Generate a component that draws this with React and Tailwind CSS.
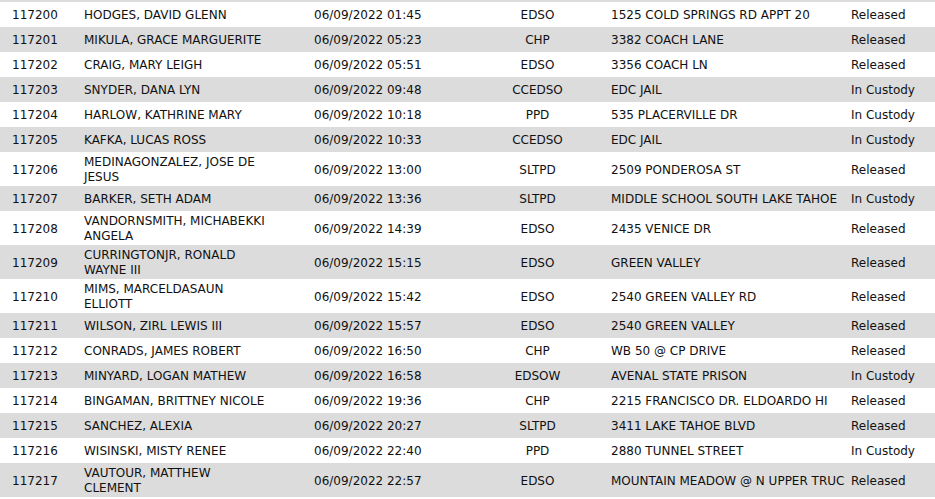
const ROWS = [
  ['117200', 'HODGES, DAVID GLENN', '06/09/2022 01:45', 'EDSO', '1525 COLD SPRINGS RD APPT 20', 'Released'],
  ['117201', 'MIKULA, GRACE MARGUERITE', '06/09/2022 05:23', 'CHP', '3382 COACH LANE', 'Released'],
  ['117202', 'CRAIG, MARY LEIGH', '06/09/2022 05:51', 'EDSO', '3356 COACH LN', 'Released'],
  ['117203', 'SNYDER, DANA LYN', '06/09/2022 09:48', 'CCEDSO', 'EDC JAIL', 'In Custody'],
  ['117204', 'HARLOW, KATHRINE MARY', '06/09/2022 10:18', 'PPD', '535 PLACERVILLE DR', 'In Custody'],
  ['117205', 'KAFKA, LUCAS ROSS', '06/09/2022 10:33', 'CCEDSO', 'EDC JAIL', 'In Custody'],
  ['117206', 'MEDINAGONZALEZ, JOSE DE JESUS', '06/09/2022 13:00', 'SLTPD', '2509 PONDEROSA ST', 'Released'],
  ['117207', 'BARKER, SETH ADAM', '06/09/2022 13:36', 'SLTPD', 'MIDDLE SCHOOL SOUTH LAKE TAHOE', 'In Custody'],
  ['117208', 'VANDORNSMITH, MICHABEKKI ANGELA', '06/09/2022 14:39', 'EDSO', '2435 VENICE DR', 'Released'],
  ['117209', 'CURRINGTONJR, RONALD WAYNE III', '06/09/2022 15:15', 'EDSO', 'GREEN VALLEY', 'Released'],
  ['117210', 'MIMS, MARCELDASAUN ELLIOTT', '06/09/2022 15:42', 'EDSO', '2540 GREEN VALLEY RD', 'Released'],
  ['117211', 'WILSON, ZIRL LEWIS III', '06/09/2022 15:57', 'EDSO', '2540 GREEN VALLEY', 'Released'],
  ['117212', 'CONRADS, JAMES ROBERT', '06/09/2022 16:50', 'CHP', 'WB 50 @ CP DRIVE', 'Released'],
  ['117213', 'MINYARD, LOGAN MATHEW', '06/09/2022 16:58', 'EDSOW', 'AVENAL STATE PRISON', 'In Custody'],
  ['117214', 'BINGAMAN, BRITTNEY NICOLE', '06/09/2022 19:36', 'CHP', '2215 FRANCISCO DR. ELDOARDO HI', 'Released'],
  ['117215', 'SANCHEZ, ALEXIA', '06/09/2022 20:27', 'SLTPD', '3411 LAKE TAHOE BLVD', 'Released'],
  ['117216', 'WISINSKI, MISTY RENEE', '06/09/2022 22:40', 'PPD', '2880 TUNNEL STREET', 'In Custody'],
  ['117217', 'VAUTOUR, MATTHEW CLEMENT', '06/09/2022 22:57', 'EDSO', 'MOUNTAIN MEADOW @ N UPPER TRUC', 'Released'],
]

export default function App() {
  return (
    <div
      className="w-[935px] h-[499px] overflow-hidden bg-white text-[12px] leading-[15px] text-[#111111]"
      style={{ fontFamily: '"DejaVu Sans", Verdana, sans-serif' }}
    >
      <div className="h-[2px] bg-[#dcdcdc]" />
      {ROWS.map((r, i) => (
        <div
          key={r[0]}
          className={`grid grid-cols-[84px_230px_156px_135px_246px_84px] items-center min-h-[25px] pt-[3px] pb-[1px] ${
            i % 2 === 1 ? 'bg-[#dcdcdc]' : 'bg-white'
          }`}
        >
          <div className="pl-[12px]">{r[0]}</div>
          <div className="pr-[46px]">{r[1]}</div>
          <div className="whitespace-nowrap">{r[2]}</div>
          <div className="text-center">{r[3]}</div>
          <div className="pl-[6px] whitespace-nowrap overflow-hidden">{r[4]}</div>
          <div className="whitespace-nowrap">{r[5]}</div>
        </div>
      ))}
    </div>
  )
}
